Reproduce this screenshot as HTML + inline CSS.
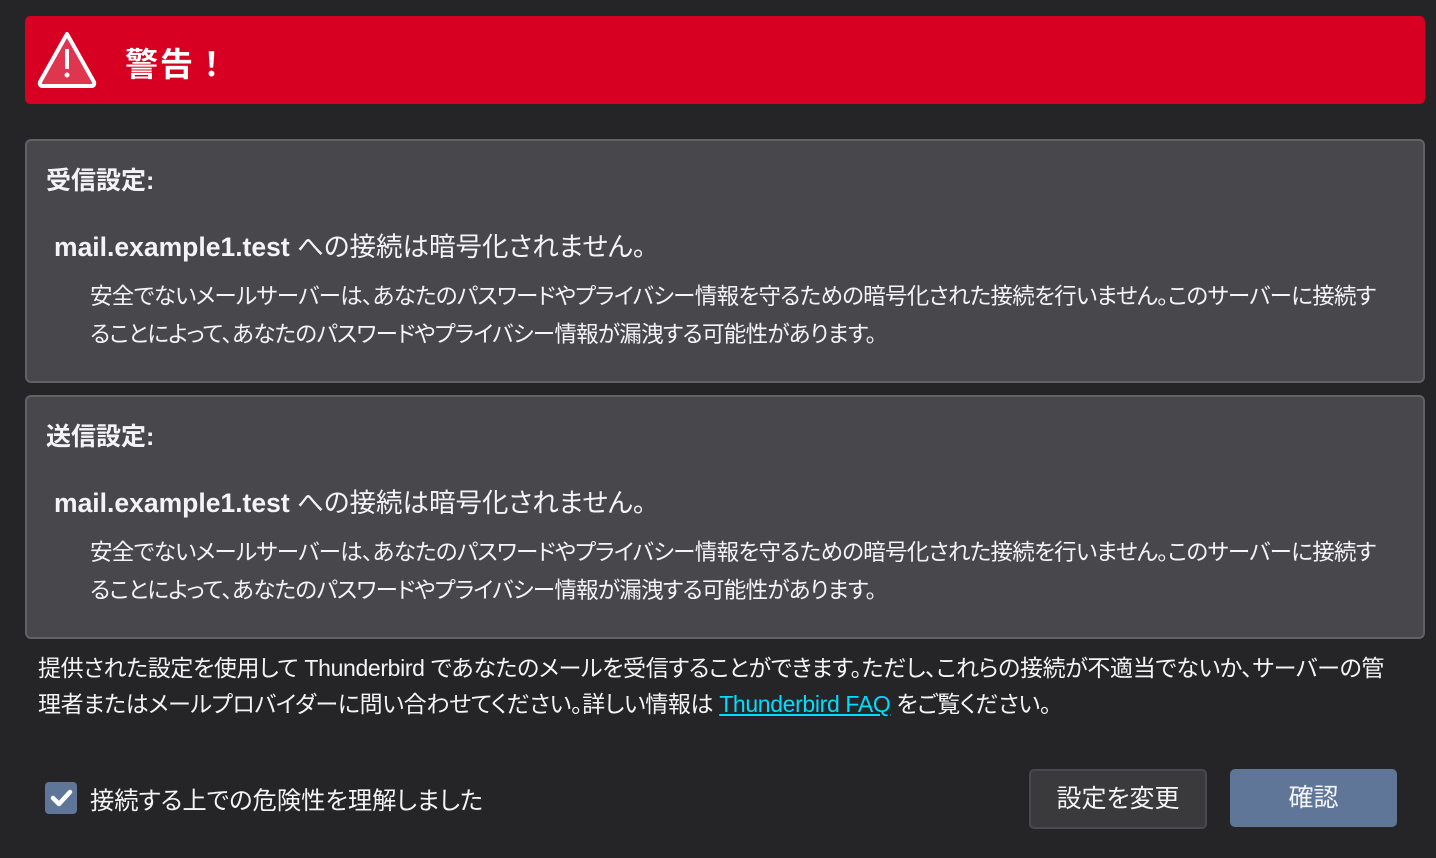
<!DOCTYPE html>
<html><head><meta charset="utf-8"><style>
body{margin:0;width:1436px;height:858px;background:#252528;color:#f4f4f6;font-family:"Liberation Sans","Noto Sans CJK JP",sans-serif;position:relative;overflow:hidden;font-feature-settings:"palt"}
.banner{position:absolute;left:25px;top:16px;width:1400px;height:88px;background:#d70022;border-radius:5px}
.banner svg{position:absolute;left:11px;top:14px}
.banner .t{position:absolute;left:100px;top:22px;font-size:33px;font-weight:bold;color:#fff;letter-spacing:2px;font-feature-settings:normal}
.box{position:absolute;left:25px;width:1396px;height:240px;background:#48474c;border:2px solid #616166;border-radius:6px}
.h{position:absolute;left:19px;top:20px;font-size:25px;font-weight:bold}
.m{position:absolute;left:27px;top:84px;font-size:26.5px}
.m b{font-weight:bold}
.d{position:absolute;left:63px;top:137px;white-space:nowrap;font-size:22.5px;line-height:38px;letter-spacing:-0.7px}
.foot{position:absolute;left:38px;top:650px;white-space:nowrap;font-size:23px;line-height:36px;letter-spacing:-0.35px}
.foot a{color:#00ddff;text-decoration:underline}
.cb{position:absolute;left:45px;top:782px;width:32px;height:32px;background:#5f7699;border-radius:4px}
.cbl{position:absolute;left:90px;top:781px;font-size:24.3px}
.btn{position:absolute;top:769px;height:56px;border-radius:5px;font-size:25px;text-align:center;line-height:56px}
</style></head><body>
<div class="banner">
<svg width="62" height="60" viewBox="0 0 62 60"><path d="M31 4 L58 52 Q59 56 55 56 L7 56 Q3 56 4 52 Z" fill="#e0354f" stroke="#fff" stroke-width="4" stroke-linejoin="round"/><rect x="29" y="19" width="4" height="20" fill="#fff"/><circle cx="31" cy="45" r="2.5" fill="#fff"/></svg>
<div class="t">警告！</div>
</div>
<div class="box" style="top:139px">
<div class="h">受信設定:</div>
<div class="m"><b>mail.example1.test</b> への接続は暗号化されません。</div>
<div class="d">安全でないメールサーバーは、あなたのパスワードやプライバシー情報を守るための暗号化された接続を行いません。このサーバーに接続す<br>ることによって、あなたのパスワードやプライバシー情報が漏洩する可能性があります。</div>
</div>
<div class="box" style="top:395px">
<div class="h">送信設定:</div>
<div class="m"><b>mail.example1.test</b> への接続は暗号化されません。</div>
<div class="d">安全でないメールサーバーは、あなたのパスワードやプライバシー情報を守るための暗号化された接続を行いません。このサーバーに接続す<br>ることによって、あなたのパスワードやプライバシー情報が漏洩する可能性があります。</div>
</div>
<div class="foot">提供された設定を使用して Thunderbird であなたのメールを受信することができます。ただし、これらの接続が不適当でないか、サーバーの管<br>理者またはメールプロバイダーに問い合わせてください。詳しい情報は <a>Thunderbird FAQ</a> をご覧ください。</div>
<div class="cb"><svg width="32" height="32"><path d="M8 16 L14 22 L25 10" stroke="#fff" stroke-width="4.5" fill="none" stroke-linecap="round" stroke-linejoin="round"/></svg></div>
<div class="cbl">接続する上での危険性を理解しました</div>
<div class="btn" style="left:1029px;width:174px;background:#3a3a3d;border:2px solid #4a4a4e">設定を変更</div>
<div class="btn" style="left:1230px;width:167px;height:58px;line-height:58px;background:#5f7699">確認</div>
</body></html>
